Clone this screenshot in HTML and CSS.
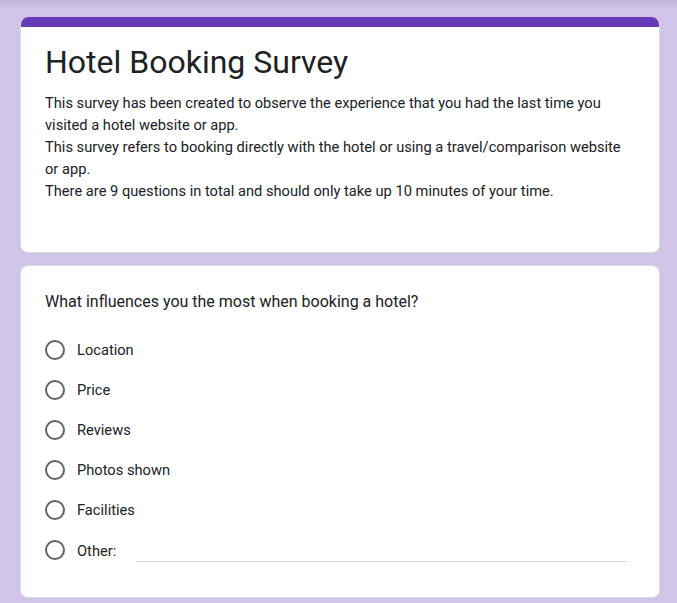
FILE: index.html
```html
<!DOCTYPE html>
<html>
<head>
<meta charset="utf-8">
<link rel="stylesheet" href="styles.css">
</head>
<body>
<div class="page">
  <div class="card header-card">
    <div class="accent"></div>
    <div class="header-body">
      <h1 class="title">Hotel Booking Survey</h1>
      <div class="desc">This survey has been created to observe the experience that you had the last time you visited a hotel website or app.<br>This survey refers to booking directly with the hotel or using a travel/comparison website or app.<br>There are 9 questions in total and should only take up 10 minutes of your time.</div>
    </div>
  </div>
  <div class="card question-card">
    <div class="question">What influences you the most when booking a hotel?</div>
    <div class="options">
      <div class="option"><span class="radio"></span><span class="label">Location</span></div>
      <div class="option"><span class="radio"></span><span class="label">Price</span></div>
      <div class="option"><span class="radio"></span><span class="label">Reviews</span></div>
      <div class="option"><span class="radio"></span><span class="label">Photos shown</span></div>
      <div class="option"><span class="radio"></span><span class="label">Facilities</span></div>
      <div class="option other"><span class="radio"></span><span class="label">Other:</span><span class="other-line"></span></div>
    </div>
  </div>
</div>
</body>
</html>
```
FILE: styles.css
```css
html, body {
  margin: 0;
  padding: 0;
}
body {
  background: #d1c4e9;
  font-family: Roboto, "Liberation Sans", Arial, sans-serif;
  color: #202124;
  min-height: 603px;
  position: relative;
}
body::before {
  content: "";
  position: absolute;
  left: 0;
  right: 0;
  top: 0;
  height: 8px;
  background: linear-gradient(rgba(0,0,0,0.08), rgba(0,0,0,0));
}
.page {
  width: 640px;
  margin-left: 20px;
  padding-top: 17px;
  display: flex;
  flex-direction: column;
  gap: 12px;
}
.card {
  background: #fff;
  border: 1px solid #dadce0;
  border-radius: 8px;
  box-sizing: border-box;
  overflow: hidden;
}
.header-card {
  height: 236px;
  border-top: none;
}
.accent {
  height: 10px;
  background: #673ab7;
}
.header-body {
  padding: 15px 24px 24px 24px;
}
.title {
  margin: 0;
  font-weight: 400;
  font-size: 32px;
  line-height: 40px;
  color: #202124;
}
.desc {
  margin-top: 10px;
  font-size: 14.67px;
  line-height: 22px;
  color: #202124;
}
.question-card {
  height: 333px;
  padding: 24px 24px 0 24px;
}
.question {
  font-size: 16px;
  line-height: 24px;
  color: #202124;
}
.options {
  margin-top: 16px;
  display: flex;
  flex-direction: column;
}
.option {
  height: 40px;
  display: flex;
  align-items: center;
}
.radio {
  width: 16px;
  height: 16px;
  border: 2px solid #5f6368;
  border-radius: 50%;
  flex: none;
}
.label {
  margin-left: 12px;
  font-size: 14.67px;
  color: #202124;
}
.other .label {
  margin-top: 2px;
}
.other-line {
  flex: 1;
  margin-left: 20px;
  margin-right: 8px;
  align-self: flex-end;
  margin-bottom: 8px;
  border-bottom: 1px solid #dadce0;
}
```
